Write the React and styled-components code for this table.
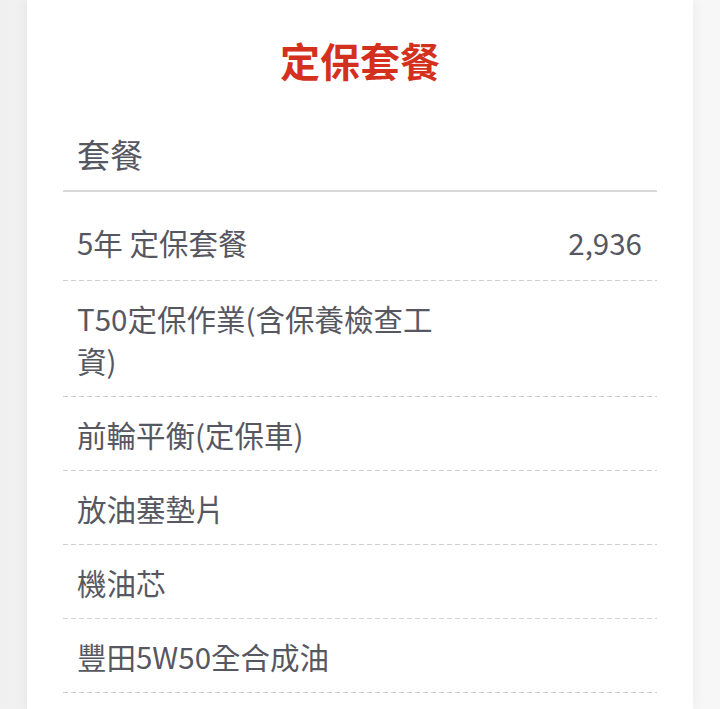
import React from "react";
import styled, { createGlobalStyle } from "styled-components";

const Global = createGlobalStyle`
  html, body { margin: 0; padding: 0; background: #f3f3f3; }
  body { font-family: "Noto Sans CJK TC", "Noto Sans", sans-serif; }
`;

const Page = styled.div`
  min-height: 709px;
  display: flex;
  justify-content: center;
  background: linear-gradient(90deg, #f0f0f0 0%, #f7f7f7 100%);
`;

const Card = styled.div`
  width: 666px;
  background: #fff;
  box-shadow: 0 0 12px rgba(0, 0, 0, 0.06);
  padding: 30px 36px 0;
  box-sizing: border-box;
`;

const Title = styled.h1`
  margin: 0;
  text-align: center;
  color: #d3311e;
  font-size: 40px;
  font-weight: 700;
  line-height: 60px;
`;

const Table = styled.div`
  margin-top: 42px;
`;

const HeadRow = styled.div`
  padding: 0 14px 14px;
  border-bottom: 2px solid #d8d8d8;
  color: #575762;
  font-size: 33px;
  line-height: 44px;
`;

const Row = styled.div`
  display: flex;
  justify-content: space-between;
  align-items: flex-start;
  padding: ${(p) => (p.$first ? "29px" : "16px")} 15px ${(p) => (p.$first ? "18px" : "16px")} 14px;
  background-image: linear-gradient(90deg, #d0d0d0 0 5px, transparent 5px 8px);
  background-size: 8px 1px;
  background-repeat: repeat-x;
  background-position: left bottom;
  color: #575762;
  font-size: 29.5px;
  line-height: 42px;
`;

const Name = styled.div`
  width: 370px;
`;

const Price = styled.div`
  text-align: right;
`;

const items = [
  ["5年 定保套餐", "2,936"],
  ["T50定保作業(含保養檢查工資)", ""],
  ["前輪平衡(定保車)", ""],
  ["放油塞墊片", ""],
  ["機油芯", ""],
  ["豐田5W50全合成油", ""],
];

export default function App() {
  return (
    <>
      <Global />
      <Page>
        <Card>
          <Title>定保套餐</Title>
          <Table>
            <HeadRow>套餐</HeadRow>
            {items.map(([n, p], i) => (
              <Row key={i} $first={i === 0}>
                <Name>{n}</Name>
                <Price>{p}</Price>
              </Row>
            ))}
          </Table>
        </Card>
      </Page>
    </>
  );
}
